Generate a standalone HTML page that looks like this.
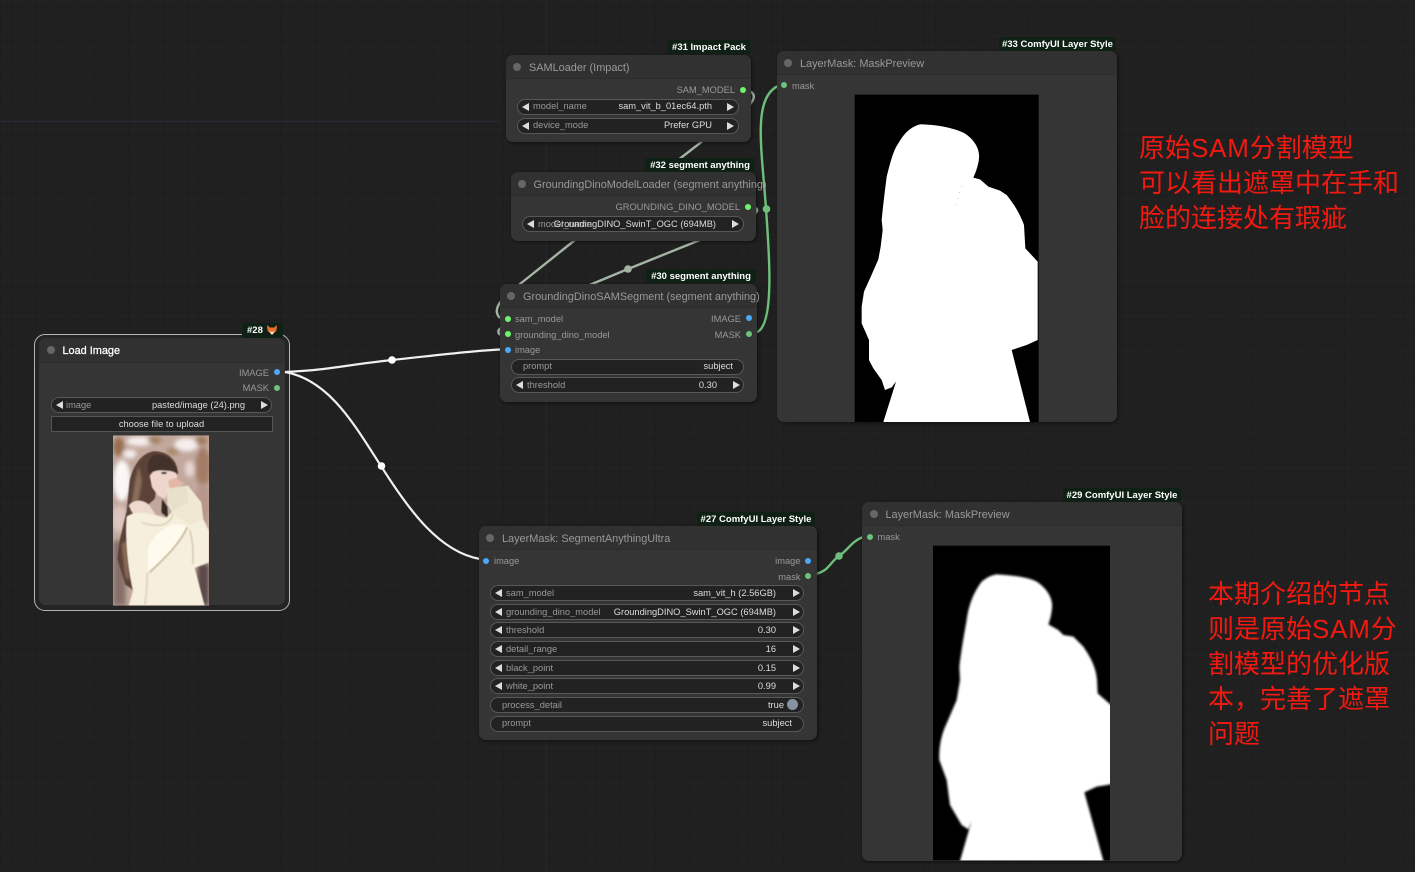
<!DOCTYPE html>
<html><head><meta charset="utf-8"><title>Nodes</title>
<style>
html,body{margin:0;padding:0;background:#202020}
#c{position:relative;width:1415px;height:872px;overflow:hidden;background-color:#202020;font-family:"Liberation Sans",Arial,sans-serif;
background-image:linear-gradient(#232323 1px,transparent 1px),linear-gradient(90deg,#1d1d1d 1px,transparent 1px);background-size:11.7px 11.7px}
.abs,.n,.t,.w,.x,.b,.d,.td{position:absolute}
.n{background:#353535;border-radius:7px;box-shadow:1px 1px 3px rgba(0,0,0,.55)}
.t{left:0;right:0;top:0;background:#313131;border-radius:7px 7px 0 0;border-bottom:1px solid #2d2d2d}
.x{white-space:nowrap;font-size:9.3px;line-height:12px;color:#999}
.h{font-size:10.9px;line-height:14px;color:#999}
.v{color:#ddd}
.b{background:#0f2014;color:#fff;font-weight:bold;font-size:9.5px;height:14px;line-height:15.500px;text-align:center;border-radius:3px;white-space:nowrap}
.d{width:6px;height:6px;border-radius:50%}
.g{background:#6bf56b}.u{background:#4da8f5}.m{background:#6cc47c}
.td{width:8px;height:8px;border-radius:50%;background:#666}
.w{height:14px;border:1px solid #585858;border-radius:9px;background:#222;box-sizing:content-box}
.w i{position:absolute;top:3px;width:0;height:0;border-top:4px solid transparent;border-bottom:4px solid transparent}
.w i.l{left:4px;border-right:7.500px solid #ddd}
.w i.r{right:3.500px;border-left:7.500px solid #ddd}
.cn{position:absolute;font-family:"Liberation Sans","Noto Sans CJK SC",sans-serif;font-size:26px;line-height:35px;color:#f21a10;white-space:nowrap}
.cn span{letter-spacing:.8px}
</style></head><body><div id="c">

<svg class="abs" style="left:0;top:0" width="1415" height="872" fill="none">
<path d="M0 121.500H500" stroke="#262b3f"/>
<path d="M546 0V872" stroke="#23273a"/>
<g stroke="#a4b4a4" stroke-width="2.400">
<path d="M745 90C760 92 754 104 740 112L575 240L520 284C505 296 490 308 500 318"/>
<path d="M750 207C772 208 740 226 700 240L628 269L592 284L520 320C498 328 496 330 500 335"/>
</g>
<g stroke="#6fbf7c" stroke-width="2.400">
<path d="M757 332C775 325 769 250 766 209C762 150 752 98 778 86"/>
<path d="M816 574C830 570 830 562 839 556C848 550 852 541 863 537"/>
</g>
<circle cx="628" cy="269" r="3.800" fill="#a4b4a4"/>
<circle cx="766.500" cy="209" r="3.800" fill="#6fbf7c"/>
<circle cx="839" cy="556" r="3.800" fill="#6fbf7c"/>
</svg>

<!-- Load Image -->
<div class="abs" style="left:34px;top:333.500px;width:254px;height:275px;border:1.500px solid #b5b5b5;border-radius:11px;background:#242424"></div>
<div class="n" style="left:39px;top:338px;width:246px;height:267px;box-shadow:none"><div class="t" style="height:24px"></div></div>
<div class="td" style="left:47px;top:346px"></div>
<div class="x h" style="left:62.500px;top:344px;color:#fff;-webkit-text-stroke:.25px #fff">Load Image</div>
<div class="b" style="left:242px;top:323px;width:41px;height:15px;text-align:left;text-indent:5px">#28</div>
<svg class="abs" style="left:267px;top:325px" width="10" height="11" viewBox="0 0 10 11"><path d="M0 0L3 2.500H7L10 0L9.500 5.500L5 10L.5 5.500Z" fill="#e8702a"/><path d="M2 6L5 10L8 6L5 7Z" fill="#fbe3cf"/></svg>
<div class="x" style="right:1146px;top:366.500px">IMAGE</div><div class="d u" style="left:273.700px;top:369.300px"></div>
<div class="x" style="right:1146px;top:382px">MASK</div><div class="d m" style="left:273.700px;top:385px"></div>
<div class="w" style="left:50.500px;top:397px;width:219.500px"><i class="l"></i><i class="r"></i></div>
<div class="x" style="left:66px;top:399px">image</div><div class="x v" style="right:1170px;top:399px">pasted/image (24).png</div>
<div class="abs" style="left:50.500px;top:415.500px;width:220px;height:14px;border:1px solid #555;background:#222"></div>
<div class="x v" style="left:50.500px;width:222px;text-align:center;top:418px">choose file to upload</div>

<svg class="abs" style="left:113.300px;top:434.500px" width="96" height="171" viewBox="25 14 288 511">
<defs>
<filter id="f1"><feGaussianBlur stdDeviation="6"/></filter>
<filter id="f2"><feGaussianBlur stdDeviation="1.800"/></filter>
<filter id="f4"><feGaussianBlur stdDeviation="4"/></filter>
<clipPath id="pc"><rect x="25" y="14" width="288" height="511"/></clipPath></defs>
<g clip-path="url(#pc)">
<rect x="25" y="14" width="288" height="511" fill="#c2a89c"/>
<g filter="url(#f1)">
<ellipse cx="105" cy="32" rx="40" ry="14" fill="#f6f0f0"/>
<ellipse cx="245" cy="42" rx="36" ry="20" fill="#f6eeee"/>
<ellipse cx="52" cy="150" rx="26" ry="62" fill="#fbf7f7"/>
<ellipse cx="75" cy="70" rx="20" ry="14" fill="#f4ecec"/>
<ellipse cx="255" cy="115" rx="14" ry="24" fill="#e7d8d4"/>
<ellipse cx="42" cy="48" rx="17" ry="28" fill="#96704f"/>
<ellipse cx="150" cy="28" rx="22" ry="10" fill="#a17f60"/>
<ellipse cx="205" cy="62" rx="20" ry="10" fill="#a68468"/>
<ellipse cx="295" cy="110" rx="22" ry="60" fill="#a27c66"/>
<ellipse cx="290" cy="30" rx="18" ry="14" fill="#a07c62"/>
<ellipse cx="45" cy="265" rx="24" ry="40" fill="#dcc5be"/>
<rect x="25" y="330" width="38" height="195" fill="#86716b"/>
<rect x="278" y="400" width="35" height="125" fill="#5a4a48"/>
<ellipse cx="295" cy="215" rx="22" ry="60" fill="#b8968b"/>
</g>
<path filter="url(#f2)" d="M145 62C185 60 218 85 220 128L205 140L160 150L150 205L115 235L70 300L88 480L62 462L38 385L45 330L66 240L75 150C85 105 110 68 145 62Z" fill="#5a4339"/>
<path filter="url(#f4)" d="M102 105C90 150 82 205 78 245L98 232L112 150Z" fill="#8c6d5a"/>
<path filter="url(#f4)" d="M50 340L62 440L74 450L66 330Z" fill="#8a6a55"/>
<g filter="url(#f2)">
<path d="M150 118L214 122L218 140L208 160L190 178L182 205L160 195L142 170L135 135Z" fill="#eed6ca"/>
<path d="M148 72C185 66 214 92 219 130C200 118 170 112 132 128C125 105 132 85 148 72Z" fill="#43312b"/>
<ellipse cx="178" cy="127" rx="9" ry="3.200" fill="#2e2220"/>
<path d="M72 225C85 205 118 205 135 225L155 255L85 250Z" fill="#eed9cf"/>
<path d="M172 205L188 228L190 262L170 245Z" fill="#362a26"/>
<path d="M66 258C90 240 130 245 185 262L205 240L280 235L313 300V395L270 412L300 525H72L85 480C70 420 60 320 66 258Z" fill="#f6efdd"/>
<path d="M186 172L250 165L290 215L296 265L255 285L205 250L188 220Z" fill="#f1e8d4"/>
<path d="M190 150L214 142L240 160L196 176Z" fill="#e3b6a6"/>
<path d="M186 175L245 165L252 215L205 240L190 215Z" fill="#e9e0cb"/>
<path d="M130 350C160 295 200 272 245 285C238 325 195 375 130 425Z" fill="#fffaee"/>
</g>
<g fill="none" filter="url(#f2)">
<path d="M135 425C172 390 222 345 248 290" stroke="#cfc1a5" stroke-width="6"/>
<path d="M264 400C268 360 264 330 256 300" stroke="#d8ccb3" stroke-width="5"/>
<path d="M205 250C195 290 150 290 110 275" stroke="#e0d4bb" stroke-width="5"/>
<path d="M120 525C130 470 125 440 130 425" stroke="#e2d7c0" stroke-width="6"/>
</g>
</g>
</svg>

<svg class="abs" style="left:0;top:0" width="1415" height="872" fill="none">
<g stroke="#f0f0f0" stroke-width="2.200">
<path d="M285 372C330 370 345 365 392 360S470 351 500 349.500"/>
<path d="M285 372C330 380 355 426 381 466C410 512 440 552 480 559"/>
</g>
<circle cx="392" cy="360" r="3.800" fill="#fff"/>
<circle cx="381.500" cy="466" r="3.800" fill="#fff"/>
</svg>

<!-- SAMLoader -->
<div class="n" style="left:506px;top:55px;width:245px;height:87px"><div class="t" style="height:23px"></div></div>
<div class="td" style="left:513px;top:63px"></div>
<div class="x h" style="left:529px;top:61px">SAMLoader (Impact)</div>
<div class="b" style="left:668px;top:40px;width:82px">#31 Impact Pack</div>
<div class="x" style="right:680px;top:83.500px">SAM_MODEL</div>
<div class="d g" style="left:740px;top:86.500px"></div>
<div class="w" style="left:517px;top:98.500px;width:219.500px"><i class="l"></i><i class="r"></i></div>
<div class="x" style="left:533px;top:100px">model_name</div><div class="x v" style="right:703px;top:100px">sam_vit_b_01ec64.pth</div>
<div class="w" style="left:517px;top:117.500px;width:219.500px"><i class="l"></i><i class="r"></i></div>
<div class="x" style="left:533px;top:119px">device_mode</div><div class="x v" style="right:703px;top:119px">Prefer GPU</div>

<!-- Dino -->
<div class="n" style="left:510.500px;top:172px;width:245px;height:69px"><div class="t" style="height:23px"></div></div>
<div class="td" style="left:518px;top:180px"></div>
<div class="x h" style="left:533.500px;top:178px">GroundingDinoModelLoader (segment anything)</div>
<div class="b" style="left:645px;top:157.500px;width:110px">#32 segment anything</div>
<div class="x" style="right:675px;top:200.500px">GROUNDING_DINO_MODEL</div>
<div class="d g" style="left:744.500px;top:203.500px"></div>
<div class="w" style="left:522px;top:215.500px;width:219.500px"><i class="l"></i><i class="r"></i></div>
<div class="x" style="left:538px;top:218px">model_name</div><div class="x v" style="right:699px;top:218px">GroundingDINO_SwinT_OGC (694MB)</div>

<!-- Segment -->
<div class="n" style="left:500px;top:284px;width:257px;height:118px"><div class="t" style="height:23px"></div></div>
<div class="td" style="left:507px;top:292px"></div>
<div class="x h" style="left:523px;top:290px">GroundingDinoSAMSegment (segment anything)</div>
<div class="b" style="left:646px;top:269px;width:110px">#30 segment anything</div>
<div class="d g" style="left:504.500px;top:315.500px"></div><div class="x" style="left:515px;top:312.500px">sam_model</div>
<div class="d g" style="left:504.500px;top:331px"></div><div class="x" style="left:515px;top:328.500px">grounding_dino_model</div>
<div class="d u" style="left:504.500px;top:346.500px"></div><div class="x" style="left:515px;top:344px">image</div>
<div class="x" style="right:674px;top:312.500px">IMAGE</div><div class="d u" style="left:745.500px;top:315px"></div>
<div class="x" style="right:674px;top:328.500px">MASK</div><div class="d m" style="left:745.500px;top:331px"></div>
<div class="w" style="left:511px;top:358.500px;width:231px"></div>
<div class="x" style="left:523px;top:360px">prompt</div><div class="x v" style="right:682px;top:360px">subject</div>
<div class="w" style="left:511px;top:377px;width:231px"><i class="l"></i><i class="r"></i></div>
<div class="x" style="left:527px;top:378.500px">threshold</div><div class="x v" style="right:698px;top:378.500px">0.30</div>

<!-- Ultra -->
<div class="n" style="left:478.500px;top:526px;width:338px;height:214px"><div class="t" style="height:23px"></div></div>
<div class="td" style="left:486px;top:534px"></div>
<div class="x h" style="left:502px;top:532px">LayerMask: SegmentAnythingUltra</div>
<div class="b" style="left:697px;top:511.500px;width:118px">#27 ComfyUI Layer Style</div>
<div class="d u" style="left:483.300px;top:557.700px"></div><div class="x" style="left:494px;top:555px">image</div>
<div class="x" style="right:614.500px;top:555px">image</div><div class="d u" style="left:805.300px;top:557.700px"></div>
<div class="x" style="right:614.500px;top:571px">mask</div><div class="d m" style="left:805.300px;top:573px"></div>

<div class="w" style="left:490px;top:585px;width:312px"><i class="l"></i><i class="r"></i></div>
<div class="x" style="left:506px;top:587px">sam_model</div><div class="x v" style="right:639px;top:587px">sam_vit_h (2.56GB)</div>
<div class="w" style="left:490px;top:603.500px;width:312px"><i class="l"></i><i class="r"></i></div>
<div class="x" style="left:506px;top:606px">grounding_dino_model</div><div class="x v" style="right:639px;top:606px">GroundingDINO_SwinT_OGC (694MB)</div>
<div class="w" style="left:490px;top:622px;width:312px"><i class="l"></i><i class="r"></i></div>
<div class="x" style="left:506px;top:624px">threshold</div><div class="x v" style="right:639px;top:624px">0.30</div>
<div class="w" style="left:490px;top:641px;width:312px"><i class="l"></i><i class="r"></i></div>
<div class="x" style="left:506px;top:643px">detail_range</div><div class="x v" style="right:639px;top:643px">16</div>
<div class="w" style="left:490px;top:659.500px;width:312px"><i class="l"></i><i class="r"></i></div>
<div class="x" style="left:506px;top:662px">black_point</div><div class="x v" style="right:639px;top:662px">0.15</div>
<div class="w" style="left:490px;top:678px;width:312px"><i class="l"></i><i class="r"></i></div>
<div class="x" style="left:506px;top:680px">white_point</div><div class="x v" style="right:639px;top:680px">0.99</div>
<div class="w" style="left:490px;top:697px;width:312px"></div>
<div class="x" style="left:502px;top:699px">process_detail</div><div class="x v" style="right:631px;top:699px">true</div>
<div class="abs" style="left:786.500px;top:699px;width:11px;height:11px;border-radius:50%;background:#8593a3"></div>
<div class="w" style="left:490px;top:715.500px;width:312px"></div>
<div class="x" style="left:502px;top:717px">prompt</div><div class="x v" style="right:623px;top:717px">subject</div>

<!-- Preview 33 -->
<div class="n" style="left:776.700px;top:51px;width:340.600px;height:371px"><div class="t" style="height:23px"></div></div>
<div class="td" style="left:784px;top:59px"></div>
<div class="x h" style="left:800px;top:57px">LayerMask: MaskPreview</div>
<div class="b" style="left:998.700px;top:36.500px;width:117.500px">#33 ComfyUI Layer Style</div>
<div class="d m" style="left:781px;top:82.300px"></div><div class="x" style="left:792px;top:80px">mask</div>
<svg class="abs" style="left:770px;top:30px" width="360" height="400" viewBox="0 0 1080 1200">
<rect x="254" y="194" width="552" height="982" fill="#000"/>
<path fill="#fff" d="M450 283C490 283 540 290 580 308C610 325 630 355 627 385C625 405 618 425 610 443L630 448L655 470L690 482L710 495C730 520 750 550 762 585L766 655L803 695V930L770 945L725 960L780 1176H340L378 1055L365 1072L345 1080L335 1050L310 1015L297 990V930L275 880V830L282 785L300 745L325 688L332 650L338 600L335 570C340 520 345 480 350 440C360 400 370 360 385 340C405 305 425 290 450 283Z"/>
<path d="M575 468L558 520L556 540" stroke="#999" stroke-width="1.500" stroke-dasharray="3 16" fill="none"/>
</svg>

<!-- Preview 29 -->
<div class="n" style="left:862px;top:502px;width:320px;height:358.500px"><div class="t" style="height:23px"></div></div>
<div class="td" style="left:869.500px;top:510px"></div>
<div class="x h" style="left:885.500px;top:508px">LayerMask: MaskPreview</div>
<div class="b" style="left:1063px;top:487.500px;width:118px">#29 ComfyUI Layer Style</div>
<div class="d m" style="left:866.700px;top:533.700px"></div><div class="x" style="left:877.500px;top:531px">mask</div>
<svg class="abs" style="left:850px;top:480px" width="340" height="390" viewBox="0 0 1020 1170">
<defs><filter id="f3" x="-5%" y="-5%" width="110%" height="110%"><feGaussianBlur stdDeviation="3"/></filter><clipPath id="pc2"><rect x="249" y="197" width="531" height="944"/></clipPath></defs>
<rect x="249" y="197" width="531" height="944" fill="#000"/>
<g clip-path="url(#pc2)"><path fill="#fff" filter="url(#f3)" d="M440 283C480 285 530 290 560 305C590 325 610 355 606 385C604 405 600 420 595 433L625 450L640 465L670 470L700 500C720 530 738 560 741 600L743 640L800 690V910L740 920L703 937L765 1160H325L365 1022L355 1048L335 1035L300 975L290 900L268 840C266 800 275 760 290 730L320 660L330 600L328 560C335 500 345 450 350 420C355 385 365 345 395 305C410 292 425 285 440 283Z"/></g>
</svg>

<div class="cn" style="left:1139px;top:131px">原始<span>SAM</span>分割模型<br>可以看出遮罩中在手和<br>脸的连接处有瑕疵</div>
<div class="cn" style="left:1208px;top:577px">本期介绍的节点<br>则是原始<span>SAM</span>分<br>割模型的优化版<br>本，完善了遮罩<br>问题</div>
</div></body></html>
